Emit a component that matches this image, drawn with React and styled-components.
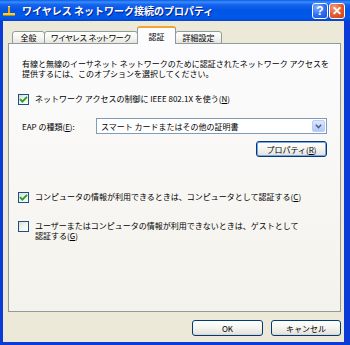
import React from 'react';
import styled, { createGlobalStyle } from 'styled-components';

const FONT = `"Noto Sans CJK JP", "Noto Sans", sans-serif`;

const GlobalStyle = createGlobalStyle`
  html, body {
    margin: 0;
    padding: 0;
    background: #ffffff;
  }
  body {
    font-family: ${FONT};
    color: #000000;
  }
  * {
    box-sizing: border-box;
  }
`;

const Window = styled.div`
  width: 350px;
  height: 345px;
  display: flex;
  flex-direction: column;
  background: #0a3bd6;
  overflow: hidden;
`;

const TitleBar = styled.div`
  height: 21px;
  flex: none;
  display: flex;
  align-items: center;
  padding: 0 5px 0 2px;
  background: linear-gradient(
    180deg,
    #0a5deb 0%,
    #3a8cf8 10%,
    #1763ee 22%,
    #0055e5 50%,
    #0058ea 85%,
    #0743c9 100%
  );
`;

const Title = styled.div`
  flex: 1;
  margin-left: 6px;
  color: #ffffff;
  font-size: 10px;
  font-weight: bold;
  white-space: nowrap;
  text-shadow: 1px 1px 0 #0a1f8c;
`;

const CaptionButtons = styled.div`
  display: flex;
  gap: 1px;
`;

const CaptionButton = styled.div`
  width: 16px;
  height: 16px;
  border: 1px solid #ffffff;
  border-radius: 3px;
  display: flex;
  align-items: center;
  justify-content: center;
  color: #ffffff;
  font-family: "Liberation Sans", sans-serif;
  font-weight: bold;
  font-size: 12px;
  line-height: 1;
  background: ${(p) =>
    p.$close
      ? 'radial-gradient(circle at 30% 25%, #f29a78 0%, #e4572c 55%, #c9401b 100%)'
      : 'radial-gradient(circle at 30% 25%, #7fb0ff 0%, #2d6cf0 55%, #1c4fd6 100%)'};
`;

const Body = styled.div`
  flex: 1;
  margin: 0 6px 3px 3px;
  background: #ece9d8;
  display: flex;
  flex-direction: column;
  padding: 6px 3px 0 5px;
`;

const TabRow = styled.div`
  height: 17px;
  display: flex;
  align-items: flex-end;
  padding-left: 4px;
  margin-bottom: -1px;
`;

const Tab = styled.div`
  position: relative;
  z-index: ${(p) => (p.$active ? 2 : 1)};
  width: ${(p) => p.$w}px;
  height: ${(p) => (p.$active ? 18 : 13)}px;
  display: flex;
  align-items: center;
  justify-content: center;
  font-size: 8px;
  font-feature-settings: "palt";
  white-space: nowrap;
  border: 1px solid #919b9c;
  border-bottom: ${(p) => (p.$active ? 'none' : '1px solid #919b9c')};
  border-top: ${(p) => (p.$active ? '2px solid #f0a52c' : '1px solid #919b9c')};
  border-radius: 3px 3px 0 0;
  margin-left: ${(p) => (p.$first ? 0 : -1)}px;
  background: ${(p) =>
    p.$active ? '#fcfcfe' : 'linear-gradient(180deg, #ffffff 0%, #f3f3ef 60%, #e5e4dc 100%)'};
`;

const Panel = styled.div`
  height: 269px;
  flex: none;
  border: 1px solid #919b9c;
  background: linear-gradient(180deg, #fcfcfe 0%, #f7f6f2 60%, #f3f2ec 100%);
  padding: 15px 13px 0 13px;
  display: flex;
  flex-direction: column;
`;

const Desc = styled.p`
  margin: 0;
  font-size: 8px;
  line-height: 10px;
  white-space: nowrap;
`;

const CheckRow = styled.div`
  display: flex;
  align-items: flex-start;
  gap: 6px;
  margin-left: -4px;
  margin-top: ${(p) => p.$mt}px;
  font-size: 8px;
  line-height: 10px;
`;

const Box = styled.div`
  width: 11px;
  height: 11px;
  flex: none;
  border: 1px solid #1c5180;
  background: linear-gradient(135deg, #dcdcd7 0%, #f4f4f0 55%, #ffffff 100%);
  display: flex;
  align-items: center;
  justify-content: center;
`;

const Label = styled.span`
  white-space: nowrap;
`;

const EapRow = styled.div`
  display: flex;
  align-items: center;
  margin-top: 13px;
  height: 16px;
  font-size: 8px;
`;

const EapLabel = styled.span`
  width: 74px;
  flex: none;
  white-space: nowrap;
`;

const Select = styled.div`
  flex: 1;
  height: 16px;
  border: 1px solid #7f9db9;
  background: #ffffff;
  display: flex;
  align-items: center;
  padding: 1px;
`;

const SelectText = styled.span`
  flex: 1;
  padding-left: 3px;
  font-size: 8px;
  white-space: nowrap;
`;

const ArrowButton = styled.div`
  width: 13px;
  height: 12px;
  flex: none;
  border: 1px solid #b9cdf5;
  border-radius: 2px;
  background: linear-gradient(180deg, #dde8fd 0%, #c3d4fb 60%, #b2c7f5 100%);
  display: flex;
  align-items: center;
  justify-content: center;
`;

const ButtonRow = styled.div`
  display: flex;
  justify-content: flex-end;
  margin-top: 7px;
`;

const Button = styled.div`
  width: ${(p) => p.$w}px;
  height: 16px;
  border: 1px solid #003c74;
  border-radius: 3px;
  background: linear-gradient(180deg, #ffffff 0%, #f4f4f0 50%, #e6e4dc 90%, #d6d0c5 100%);
  box-shadow: ${(p) => (p.$focus ? 'inset 0 0 0 1px #7ea3ec' : 'none')};
  display: flex;
  align-items: center;
  justify-content: center;
  font-size: 8px;
  white-space: nowrap;
`;

const Footer = styled.div`
  display: flex;
  justify-content: flex-end;
  gap: 8px;
  padding-top: 8px;
`;

const NetIcon = () => (
  <svg width="14" height="12" viewBox="0 0 14 12">
    <rect x="6" y="2" width="2" height="6" fill="#e8a41c" />
    <rect x="1" y="8" width="12" height="2" fill="#f4d030" />
    <rect x="1" y="10" width="12" height="1" fill="#b8801a" />
    <rect x="6" y="1" width="2" height="1" fill="#f8e070" />
  </svg>
);

const Check = () => (
  <svg width="9" height="9" viewBox="0 0 9 9">
    <path d="M1 4.2 L3.4 6.6 L8 1.8" fill="none" stroke="#21a121" strokeWidth="1.8" />
  </svg>
);

const Chevron = () => (
  <svg width="7" height="5" viewBox="0 0 7 5">
    <path d="M0.8 0.8 L3.5 3.6 L6.2 0.8" fill="none" stroke="#4d6185" strokeWidth="1.5" />
  </svg>
);

const App = () => (
  <>
    <GlobalStyle />
    <Window>
      <TitleBar>
        <NetIcon />
        <Title>ワイヤレス ネットワーク接続のプロパティ</Title>
        <CaptionButtons>
          <CaptionButton>?</CaptionButton>
          <CaptionButton $close>✕</CaptionButton>
        </CaptionButtons>
      </TitleBar>

      <Body>
        <TabRow>
          <Tab $w={33} $first>全般</Tab>
          <Tab $w={94}>ワイヤレス ネットワーク</Tab>
          <Tab $w={39} $active>認証</Tab>
          <Tab $w={47}>詳細設定</Tab>
        </TabRow>

        <Panel>
          <Desc>
            有線と無線のイーサネット ネットワークのために認証されたネットワーク アクセスを
            <br />
            提供するには、このオプションを選択してください。
          </Desc>

          <CheckRow $mt={15}>
            <Box>
              <Check />
            </Box>
            <Label>
              ネットワーク アクセスの制御に IEEE 802.1X を使う(<u>N</u>)
            </Label>
          </CheckRow>

          <EapRow>
            <EapLabel>
              EAP の種類(<u>E</u>):
            </EapLabel>
            <Select>
              <SelectText>スマート カードまたはその他の証明書</SelectText>
              <ArrowButton>
                <Chevron />
              </ArrowButton>
            </Select>
          </EapRow>

          <ButtonRow>
            <Button $w={71} $focus>
              プロパティ(<u>R</u>)
            </Button>
          </ButtonRow>

          <CheckRow $mt={35}>
            <Box>
              <Check />
            </Box>
            <Label>
              コンピュータの情報が利用できるときは、コンピュータとして認証する(<u>C</u>)
            </Label>
          </CheckRow>

          <CheckRow $mt={18}>
            <Box />
            <Label>
              ユーザーまたはコンピュータの情報が利用できないときは、ゲストとして
              <br />
              認証する(<u>G</u>)
            </Label>
          </CheckRow>
        </Panel>

        <Footer>
          <Button $w={71}>OK</Button>
          <Button $w={70}>キャンセル</Button>
        </Footer>
      </Body>
    </Window>
  </>
);

export default App;
